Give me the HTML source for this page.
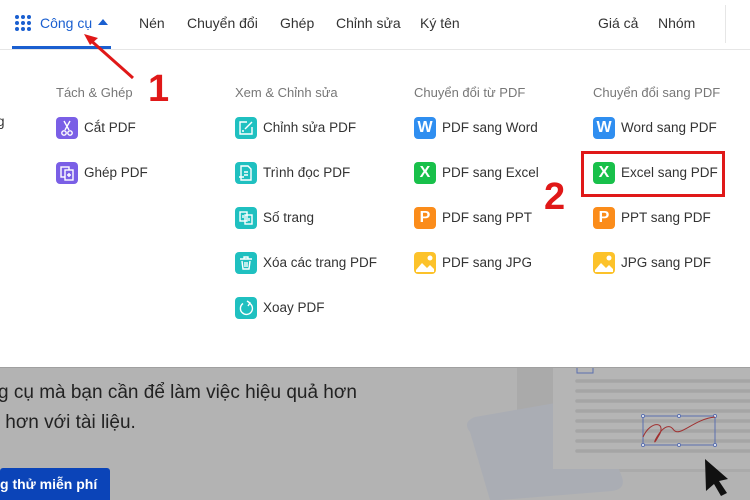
<!DOCTYPE html>
<html style="width:750px;height:500px;overflow:hidden"><head><meta charset="utf-8"><style>
*{margin:0;padding:0;box-sizing:border-box}
body{width:750px;height:500px;overflow:hidden;position:relative;background:#fff;font-family:"Liberation Sans","Noto Sans CJK SC",sans-serif;color:#333}
.a{position:absolute;white-space:nowrap}
.nav{font-size:14px;top:15px;color:#333}
.h{font-size:13px;color:#777;top:85px}
.t{font-size:13.5px;color:#333}
.ic{position:absolute;width:22px;height:22px;border-radius:4px;color:#fff;font-weight:bold;font-size:16px;text-align:center;line-height:22px;overflow:hidden}
.ic svg{display:block}
.pu{background:#7a5fe6}.te{background:#1fc0c0}.bl{background:#2f8ef0}.gr{background:#18c04a}.or{background:#fb8c1a}.ye{background:#fcc22a}
</style></head><body>
<div class="a" style="left:0;top:49px;width:750px;height:1px;background:#e6e6e6"></div>
<svg class="a" style="left:15px;top:15px" width="16" height="16"><g fill="#1a5fd0"><circle cx="2" cy="2" r="2"/><circle cx="8" cy="2" r="2"/><circle cx="14" cy="2" r="2"/><circle cx="2" cy="8" r="2"/><circle cx="8" cy="8" r="2"/><circle cx="14" cy="8" r="2"/><circle cx="2" cy="14" r="2"/><circle cx="8" cy="14" r="2"/><circle cx="14" cy="14" r="2"/></g></svg>
<div class="a nav" style="left:40px;color:#1a5fd0">Công cụ</div>
<svg class="a" style="left:98px;top:19px" width="10" height="6"><path d="M0 6L5 0L10 6Z" fill="#1a5fd0"/></svg>
<div class="a" style="left:12px;top:46px;width:99px;height:3px;background:#1a5fd0"></div>
<div class="a nav" style="left:139px">Nén</div>
<div class="a nav" style="left:187px">Chuyển đổi</div>
<div class="a nav" style="left:280px">Ghép</div>
<div class="a nav" style="left:336px">Chỉnh sửa</div>
<div class="a nav" style="left:420px">Ký tên</div>
<div class="a nav" style="left:598px">Giá cả</div>
<div class="a nav" style="left:658px">Nhóm</div>
<div class="a" style="left:725px;top:5px;width:1px;height:38px;background:#e6e6e6"></div>
<div class="a t" style="left:-3px;top:114px">g</div>

<div class="a h" style="left:56px">Tách &amp; Ghép</div>
<div class="a h" style="left:235px">Xem &amp; Chỉnh sửa</div>
<div class="a h" style="left:414px">Chuyển đổi từ PDF</div>
<div class="a h" style="left:593px">Chuyển đổi sang PDF</div>

<div class="ic pu" style="left:56px;top:117px"><svg width="22" height="22" fill="none" stroke="#fff" stroke-width="1.4"><path d="M8 4L13 13M14 4L9 13"/><circle cx="8" cy="16" r="2.2"/><circle cx="14" cy="16" r="2.2"/></svg></div><div class="a t" style="left:84px;top:120px">Cắt PDF</div>
<div class="ic pu" style="left:56px;top:162px"><svg width="22" height="22" fill="none" stroke="#fff" stroke-width="1.4"><rect x="5" y="5" width="8" height="10"/><rect x="9" y="8" width="8" height="10" fill="#7a5fe6"/><path d="M13 11V15M11 13H15"/></svg></div><div class="a t" style="left:84px;top:165px">Ghép PDF</div>

<div class="ic te" style="left:235px;top:117px"><svg width="22" height="22" fill="none" stroke="#fff" stroke-width="1.4"><path d="M12 5H5V17H17V10"/><path d="M10 12L17 5"/><path d="M7 14H9"/></svg></div><div class="a t" style="left:263px;top:120px">Chỉnh sửa PDF</div>
<div class="ic te" style="left:235px;top:162px"><svg width="22" height="22" fill="none" stroke="#fff" stroke-width="1.4"><path d="M6 4H13L16 7V18H6Z"/><path d="M9 10H13M9 13H13M4 15H9"/></svg></div><div class="a t" style="left:263px;top:165px">Trình đọc PDF</div>
<div class="ic te" style="left:235px;top:207px"><svg width="22" height="22" fill="none" stroke="#fff" stroke-width="1.4"><rect x="5" y="5" width="7" height="9"/><rect x="10" y="8" width="7" height="9"/><path d="M8 8V11M14 11V14"/></svg></div><div class="a t" style="left:263px;top:210px">Số trang</div>
<div class="ic te" style="left:235px;top:252px"><svg width="22" height="22" fill="none" stroke="#fff" stroke-width="1.4"><path d="M5 7H17M9 7V5H13V7M7 9L8 17H14L15 9M10 10V15M12 10V15"/></svg></div><div class="a t" style="left:263px;top:255px">Xóa các trang PDF</div>
<div class="ic te" style="left:235px;top:297px"><svg width="22" height="22" fill="none" stroke="#fff" stroke-width="1.4"><path d="M14 6A6 6 0 1 1 8 6.5"/><path d="M12 4L15 6L13 9"/></svg></div><div class="a t" style="left:263px;top:300px">Xoay PDF</div>

<div class="ic bl" style="left:414px;top:117px">W</div><div class="a t" style="left:442px;top:120px">PDF sang Word</div>
<div class="ic gr" style="left:414px;top:162px">X</div><div class="a t" style="left:442px;top:165px">PDF sang Excel</div>
<div class="ic or" style="left:414px;top:207px">P</div><div class="a t" style="left:442px;top:210px">PDF sang PPT</div>
<div class="ic ye" style="left:414px;top:252px"><svg width="22" height="22"><circle cx="16" cy="6" r="2.5" fill="#fff"/><path d="M2 18L8 11L13 16L16 13L20 17V20H2Z" fill="#fff"/></svg></div><div class="a t" style="left:442px;top:255px">PDF sang JPG</div>

<div class="ic bl" style="left:593px;top:117px">W</div><div class="a t" style="left:621px;top:120px">Word sang PDF</div>
<div class="ic gr" style="left:593px;top:162px">X</div><div class="a t" style="left:621px;top:165px">Excel sang PDF</div>
<div class="ic or" style="left:593px;top:207px">P</div><div class="a t" style="left:621px;top:210px">PPT sang PDF</div>
<div class="ic ye" style="left:593px;top:252px"><svg width="22" height="22"><circle cx="16" cy="6" r="2.5" fill="#fff"/><path d="M2 18L8 11L13 16L16 13L20 17V20H2Z" fill="#fff"/></svg></div><div class="a t" style="left:621px;top:255px">JPG sang PDF</div>

<div class="a" style="left:581px;top:151px;width:144px;height:46px;border:3px solid #e01818"></div>
<div class="a" style="left:148px;top:68px;font-size:38px;font-weight:bold;color:#e01818">1</div>
<div class="a" style="left:544px;top:176px;font-size:38px;font-weight:bold;color:#e01818">2</div>
<svg class="a" style="left:0;top:0" width="200" height="100"><path d="M133 78L88 38" stroke="#e01818" stroke-width="3"/><path d="M84 34L98 38L90 45Z" fill="#e01818"/></svg>

<svg class="a" style="left:0;top:367px" width="750" height="133">
<rect width="750" height="133" fill="#b3b3b3"/>
<rect width="750" height="1" fill="#a0a0a0"/>
<rect x="517" y="1" width="233" height="104" fill="#aaaaaa"/>
<path d="M470 65Q462 55 475 50L590 30L622 110Q626 122 612 124L500 133L490 133Z" fill="#aaadb4"/>
<rect x="553" y="1" width="197" height="101" fill="#b5b5b5"/>
<g transform="translate(553,0)">
<g stroke="#a5a5a5" stroke-width="3.5" stroke-linecap="round"><path d="M24 14H197M24 24H197M24 34H197M24 44H197M24 54H197M24 64H197M24 74H197M24 84H197"/></g>
<rect x="90" y="49" width="72" height="29" fill="none" stroke="#5a70b0"/>
<g fill="#fff" stroke="#5a70b0"><circle cx="90" cy="49" r="1.5"/><circle cx="126" cy="49" r="1.5"/><circle cx="162" cy="49" r="1.5"/><circle cx="90" cy="78" r="1.5"/><circle cx="126" cy="78" r="1.5"/><circle cx="162" cy="78" r="1.5"/></g>
<path d="M90 70C98 52 115 55 105 70C95 88 110 50 120 62C126 72 140 52 162 50" fill="none" stroke="#a03030"/>
<path d="M24 1V6H40V1" fill="none" stroke="#5a70b0"/>
<path d="M152 92L175 112L166 114L174 126L168 129L161 117L153 124Z" fill="#111"/>
</g>
</svg>
<div class="a" style="left:-2px;top:382px;font-size:19px;color:#222">g cụ mà bạn cần để làm việc hiệu quả hơn</div>
<div class="a" style="left:0;top:412px;font-size:19px;color:#222">&nbsp;hơn với tài liệu.</div>
<div class="a" style="left:0;top:468px;width:110px;height:32px;background:#0b44b8;border-radius:3px 3px 0 0;color:#fff;font-weight:bold;font-size:14px;line-height:32px;overflow:hidden">g thử miễn phí</div>
</body></html>
